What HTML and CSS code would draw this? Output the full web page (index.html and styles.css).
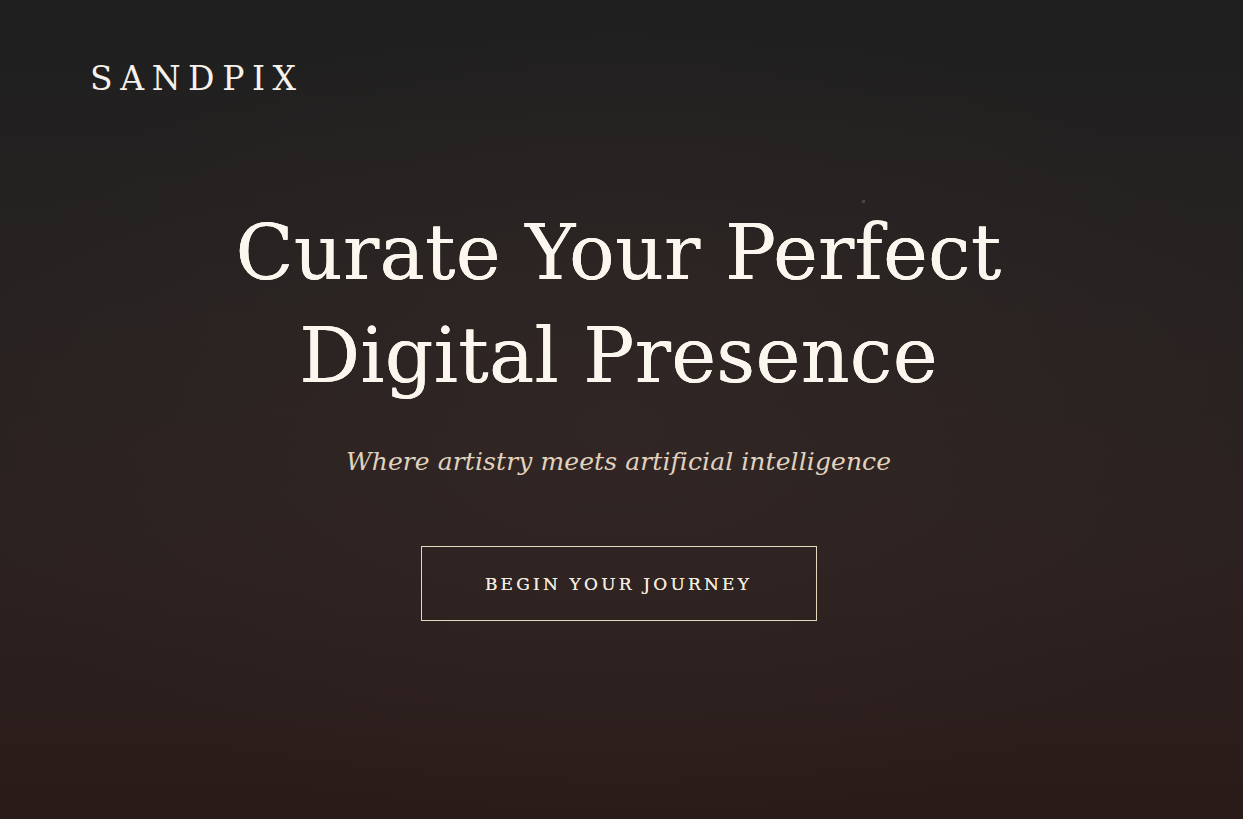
FILE: index.html
```html
<!DOCTYPE html>
<html lang="en">
<head>
<meta charset="utf-8">
<title>Sandpix</title>
<link rel="stylesheet" href="styles.css">
</head>
<body>
<div class="page">
  <header class="header">
    <div class="logo">SANDPIX</div>
  </header>
  <main class="hero">
    <h1 class="title">Curate Your Perfect<br>Digital Presence</h1>
    <p class="tagline">Where artistry meets artificial intelligence</p>
    <a class="cta" href="#">BEGIN YOUR JOURNEY</a>
  </main>
  <span class="speck"></span>
</div>
</body>
</html>
```

FILE: styles.css
```css
* { box-sizing: border-box; }
html, body { margin: 0; padding: 0; height: 100%; }
body {
  font-family: "DejaVu Serif", "Liberation Serif", serif;
  background: #222;
}
.page {
  position: relative;
  min-height: 100vh;
  overflow: hidden;
  background:
    radial-gradient(ellipse 55% 50% at 50% 52%, rgba(58, 44, 42, 0.45), rgba(58, 44, 42, 0) 100%),
    linear-gradient(180deg, #1f1f1f 0%, #262221 35%, #2c2120 70%, #291b18 100%);
}
.header {
  padding: 62px 90px 0;
}
.logo {
  color: #f6f1ea;
  font-size: 33px;
  letter-spacing: 7.6px;
  line-height: 1;
}
.hero {
  display: flex;
  flex-direction: column;
  align-items: center;
  text-align: center;
  padding: 106px 6px 0 0;
}
.title {
  margin: 0;
  color: #fbf6ee;
  font-weight: 400;
  font-size: 76px;
  line-height: 103px;
  letter-spacing: 0.2px;
  text-shadow: 0 0 0.6px #fbf6ee;
}
.tagline {
  margin: 40px 0 0;
  color: #e0d2bd;
  font-style: italic;
  font-size: 25px;
  line-height: 1.2;
  letter-spacing: 0.1px;
}
.cta {
  margin-top: 69px;
  width: 396px;
  height: 75px;
  display: flex;
  align-items: center;
  justify-content: center;
  border: 1px solid #e8d7bf;
  color: #f2e9dc;
  text-decoration: none;
  font-size: 17px;
  letter-spacing: 3.2px;
  text-shadow: 0 0 0.5px #f2e9dc;
}
.speck {
  position: absolute;
  left: 862px;
  top: 200px;
  width: 3px;
  height: 3px;
  background: #4a4646;
}
```
